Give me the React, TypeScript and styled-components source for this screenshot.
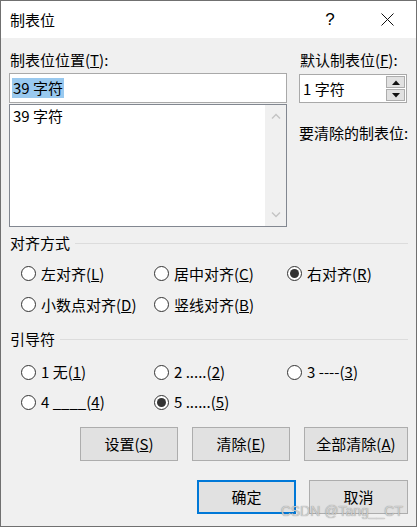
import React from 'react'
import styled, { createGlobalStyle } from 'styled-components'

const GlobalStyle = createGlobalStyle`
  html, body {
    margin: 0;
    padding: 0;
    background: #ffffff;
  }
  * {
    box-sizing: border-box;
  }
`

const FONT = `"Noto Sans CJK SC", "Noto Sans", sans-serif`

const alignOptions = [
  { text: '左对齐', key: 'L', checked: false },
  { text: '居中对齐', key: 'C', checked: false },
  { text: '右对齐', key: 'R', checked: true },
  { text: '小数点对齐', key: 'D', checked: false },
  { text: '竖线对齐', key: 'B', checked: false },
]

const leaderOptions = [
  { text: '1 无', key: '1', checked: false },
  { text: '2 .....', key: '2', checked: false },
  { text: '3 ----', key: '3', checked: false },
  { text: '4 ____', key: '4', checked: false },
  { text: '5 ......', key: '5', checked: true },
]

const Radio = ({ text, hotkey, checked }: { text: string, hotkey: string, checked: boolean }) => (
  <RadioItem>
    <Circle>{checked && <Dot />}</Circle>
    <span>{text}(<u>{hotkey}</u>)</span>
  </RadioItem>
)

const App = () => {
  return (
    <Window>
      <GlobalStyle />
      <TitleBar>
        <Title>制表位</Title>
        <Controls>
          <CtrlButton>
            <Help>?</Help>
          </CtrlButton>
          <CtrlButton>
            <svg width="13" height="13" viewBox="0 0 13 13">
              <path d="M0.5 0.5 L12.5 12.5 M12.5 0.5 L0.5 12.5" stroke="#111" strokeWidth="1" fill="none" />
            </svg>
          </CtrlButton>
        </Controls>
      </TitleBar>

      <Body>
        <TopGrid>
          <Column>
            <Label>制表位位置(<u>T</u>):</Label>
            <TextBox>
              <Selected>39 字符</Selected>
            </TextBox>
            <ListBox>
              <ListItems>
                <ListItem>39 字符</ListItem>
              </ListItems>
              <ScrollTrack>
                <svg width="10" height="6" viewBox="0 0 10 6">
                  <path d="M1 5.5 L5 1.5 L9 5.5" stroke="#c4c4c4" strokeWidth="1.4" fill="none" />
                </svg>
                <svg width="10" height="6" viewBox="0 0 10 6">
                  <path d="M1 0.5 L5 4.5 L9 0.5" stroke="#c4c4c4" strokeWidth="1.4" fill="none" />
                </svg>
              </ScrollTrack>
            </ListBox>
          </Column>

          <Column>
            <Label>默认制表位(<u>F</u>):</Label>
            <SpinBox>
              <SpinText>1 字符</SpinText>
              <SpinButtons>
                <SpinButton>
                  <svg width="8" height="5" viewBox="0 0 8 5"><path d="M0 5 L4 0.5 L8 5 Z" fill="#111" /></svg>
                </SpinButton>
                <SpinButton>
                  <svg width="8" height="5" viewBox="0 0 8 5"><path d="M0 0 L4 4.5 L8 0 Z" fill="#111" /></svg>
                </SpinButton>
              </SpinButtons>
            </SpinBox>
            <ClearLabel>要清除的制表位:</ClearLabel>
          </Column>
        </TopGrid>

        <GroupHeader $top={6}>
          <span>对齐方式</span>
          <Rule />
        </GroupHeader>
        <RadioGrid $row={31} $top={5}>
          {alignOptions.map(o => (
            <Radio key={o.key} text={o.text} hotkey={o.key} checked={o.checked} />
          ))}
        </RadioGrid>

        <GroupHeader $top={9}>
          <span>引导符</span>
          <Rule />
        </GroupHeader>
        <RadioGrid $row={30} $top={8}>
          {leaderOptions.map(o => (
            <Radio key={o.key} text={o.text} hotkey={o.key} checked={o.checked} />
          ))}
        </RadioGrid>

        <ButtonRow $top={10} $gap={14}>
          <Button $w={98}>设置(<u>S</u>)</Button>
          <Button $w={98}>清除(<u>E</u>)</Button>
          <Button $w={104}>全部清除(<u>A</u>)</Button>
        </ButtonRow>
        <ButtonRow $top={19} $gap={13}>
          <Button $w={99} $primary>确定</Button>
          <Button $w={99}>取消</Button>
        </ButtonRow>
      </Body>

      <Watermark>CSDN @Tang__CT</Watermark>
    </Window>
  )
}

export default App

const Window = styled.div`
  position: relative;
  width: 417px;
  height: 527px;
  border: 1px solid #707070;
  background: #f0f0f0;
  font-family: ${FONT};
  font-size: 15px;
  color: #000;
  display: flex;
  flex-direction: column;
  overflow: hidden;
`

const TitleBar = styled.div`
  height: 37px;
  background: #ffffff;
  display: flex;
  align-items: center;
  justify-content: space-between;
  padding: 0 6px 0 9px;
`

const Title = styled.div`
  font-size: 15px;
  line-height: 20px;
`

const Controls = styled.div`
  display: flex;
  gap: 11px;
  height: 100%;
`

const CtrlButton = styled.div`
  width: 46px;
  height: 100%;
  display: flex;
  align-items: center;
  justify-content: center;
`

const Help = styled.span`
  font-family: "Liberation Sans", sans-serif;
  font-size: 17px;
  line-height: 20px;
`

const Body = styled.div`
  flex: 1;
  padding: 12px 8px 0 8px;
  display: flex;
  flex-direction: column;
`

const TopGrid = styled.div`
  display: grid;
  grid-template-columns: 278px 108px;
  column-gap: 12px;
`

const Column = styled.div`
  display: flex;
  flex-direction: column;
`

const Label = styled.div`
  line-height: 20px;
  padding-left: 1px;
  white-space: nowrap;
`

const TextBox = styled.div`
  margin-top: 3px;
  height: 30px;
  border: 1px solid #a9a9a9;
  background: #fff;
  display: flex;
  align-items: center;
  padding-left: 2px;
`

const Selected = styled.span`
  background: #99c9ef;
  line-height: 20px;
  padding: 0 1px;
`

const ListBox = styled.div`
  margin-top: 1px;
  height: 123px;
  border: 1px solid #828790;
  background: #fff;
  display: flex;
`

const ListItems = styled.div`
  flex: 1;
  padding: 1px 3px;
`

const ListItem = styled.div`
  line-height: 20px;
`

const ScrollTrack = styled.div`
  width: 21px;
  background: #f0f0f0;
  display: flex;
  flex-direction: column;
  justify-content: space-between;
  align-items: center;
  padding: 8px 0 8px 0;
`

const SpinBox = styled.div`
  margin-top: 4px;
  height: 29px;
  border: 1px solid #a9a9a9;
  background: #fff;
  display: flex;
  align-items: center;
  justify-content: space-between;
  padding: 0 1px 0 3px;
`

const SpinText = styled.span`
  line-height: 20px;
`

const SpinButtons = styled.div`
  display: flex;
  flex-direction: column;
  gap: 1px;
`

const SpinButton = styled.div`
  width: 19px;
  height: 12px;
  border: 1px solid #adadad;
  background: #e1e1e1;
  display: flex;
  align-items: center;
  justify-content: center;
`

const ClearLabel = styled.div`
  margin-top: 20px;
  line-height: 20px;
  white-space: nowrap;
`

const GroupHeader = styled.div<{ $top: number }>`
  margin-top: ${p => p.$top}px;
  display: flex;
  align-items: center;
  gap: 5px;
  line-height: 20px;
  padding-left: 1px;
`

const Rule = styled.div`
  flex: 1;
  height: 1px;
  background: #dcdcdc;
`

const RadioGrid = styled.div<{ $row: number, $top: number }>`
  margin-top: ${p => p.$top}px;
  display: grid;
  grid-template-columns: repeat(3, 133px);
  grid-auto-rows: ${p => p.$row}px;
  padding-left: 12px;
`

const RadioItem = styled.div`
  display: flex;
  align-items: center;
  gap: 5px;
  line-height: 20px;
  white-space: nowrap;
`

const Circle = styled.div`
  width: 15px;
  height: 15px;
  border-radius: 50%;
  border: 1px solid #333;
  background: #fff;
  display: flex;
  align-items: center;
  justify-content: center;
`

const Dot = styled.div`
  width: 9px;
  height: 9px;
  border-radius: 50%;
  background: #333;
`

const ButtonRow = styled.div<{ $top: number, $gap: number }>`
  margin-top: ${p => p.$top}px;
  display: flex;
  justify-content: flex-end;
  gap: ${p => p.$gap}px;
`

const Button = styled.div<{ $w: number, $primary?: boolean }>`
  width: ${p => p.$w}px;
  height: 34px;
  background: #e1e1e1;
  border: ${p => (p.$primary ? '2px solid #0078d7' : '1px solid #adadad')};
  display: flex;
  align-items: center;
  justify-content: center;
  line-height: 20px;
`

const Watermark = styled.div`
  position: absolute;
  right: 13px;
  bottom: 7px;
  font-family: "Liberation Sans", sans-serif;
  font-size: 14px;
  color: rgba(215, 215, 215, 0.9);
  text-shadow: 0 0 1px rgba(60, 60, 60, 0.6);
  pointer-events: none;
`
